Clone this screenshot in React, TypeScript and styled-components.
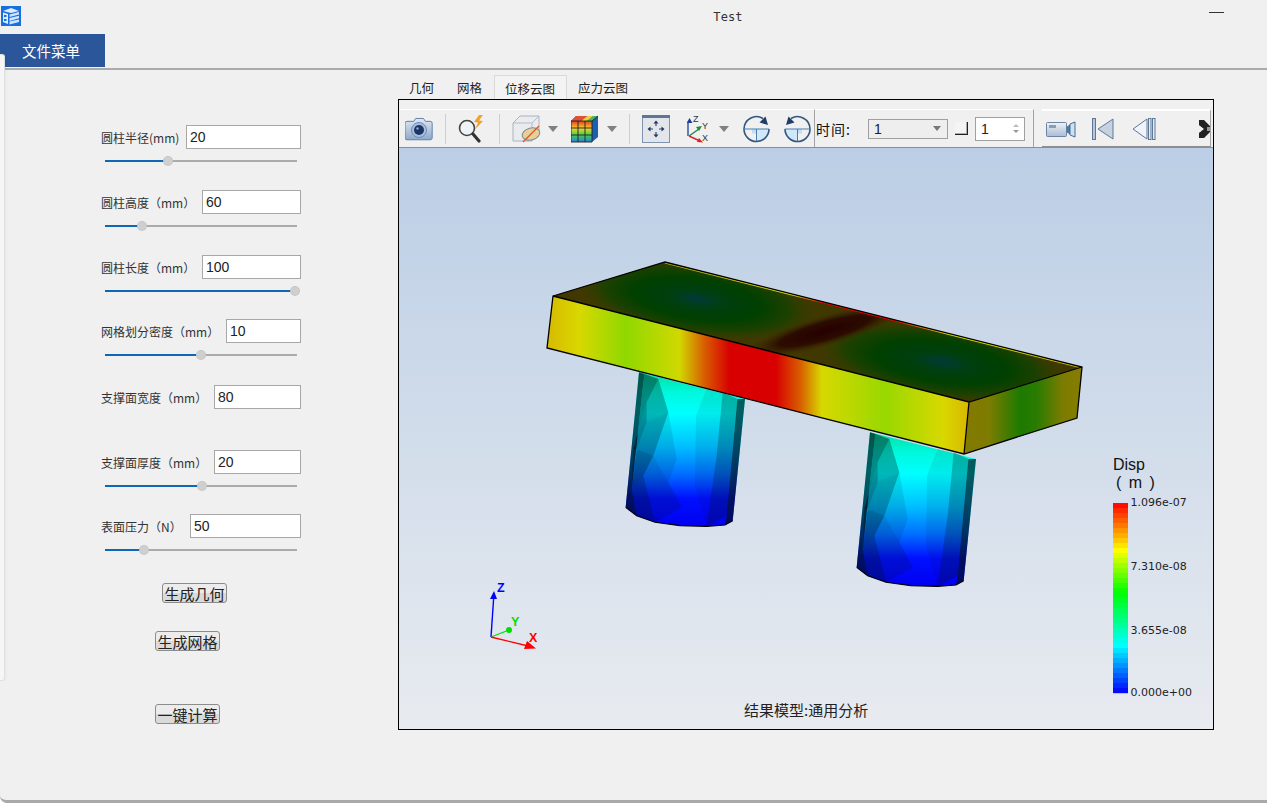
import React from "react";
import styled, { createGlobalStyle } from "styled-components";

const Global = createGlobalStyle`
  html, body { margin: 0; padding: 0; background: #fff; overflow: hidden; }
  * { box-sizing: border-box; }
`;
const cjk = `"Noto Sans CJK SC", "Liberation Sans", sans-serif`;

const Win = styled.div`
  position: relative; width: 1267px; height: 803px; background: #f0f0f0;
  border-bottom: 3px solid #a9a9a9; border-bottom-left-radius: 7px;
  font-family: ${cjk}; color: #222; overflow: hidden;
`;
const TitleBar = styled.div`
  height: 34px; display: flex; align-items: center; padding: 0 43px 2px 1px; position: relative;
`;
const Title = styled.div`
  flex: 1; text-align: center; font: 12px "DejaVu Sans Mono", monospace; color: #333;
  padding-left: 226px; margin-top: 2px; letter-spacing: 0.1px;
`;
const Minimize = styled.div`width: 15px; height: 1px; background: #333; margin-bottom: 8px;`;
const MenuBar = styled.div`height: 36px; border-bottom: 2px solid #ababab; display: flex;`;
const MenuTab = styled.div`
  width: 105px; height: 33px; background: #2b579a; color: #fff; font-size: 14.5px;
  display: flex; align-items: center; padding-left: 22px;
`;
const SideEdge = styled.div`
  position: absolute; left: 0; top: 54px; width: 5px; height: 627px; background: #f6f6f6;
  border: 1px solid #e0e0e0; border-left: 0; border-radius: 0 3px 3px 0;
  box-shadow: 1px 0 3px rgba(0,0,0,.04);
`;
const Content = styled.div`display: flex; align-items: flex-start;`;
const Form = styled.div`width: 398px; padding: 55px 0 0 101px; display: flex; flex-direction: column;`;
const Field = styled.div<{ $h: number }>`width: 200px; height: ${p => p.$h}px;`;
const FieldRow = styled.div`display: flex; justify-content: space-between; align-items: center; height: 24px;`;
const Label = styled.div`font-size: 12px; color: #333; white-space: nowrap;`;
const ValueBox = styled.div<{ $w: number }>`
  width: ${p => p.$w}px; height: 24px; background: #fff; border: 1px solid #a8a8a8;
  font: 14px "Liberation Sans", sans-serif; line-height: 23px; padding-left: 3px; color: #222;
`;
const Slider = styled.div`display: flex; align-items: center; width: 192px; height: 12px; margin: 6px 0 0 4px;`;
const Fill = styled.div`height: 2px; background: #0f67b5;`;
const Knob = styled.div`
  width: 10px; height: 10px; flex: none; margin: 0 -5px; border-radius: 50%; background: #cfcfcf;
  border: 1px dotted #bdbdbd; position: relative;
`;
const Rest = styled.div`height: 2px; flex: 1; background: #ababab;`;
const ActionButton = styled.button<{ $ml: number; $mt: number }>`
  display: block; width: 65px; height: 20px; padding: 0; margin: ${p => p.$mt}px 0 0 ${p => p.$ml}px;
  font-family: ${cjk}; font-size: 15px; line-height: 17px; color: #222;
  border: 1px solid #8c8c8c; border-radius: 3px;
  background: linear-gradient(#ececec 0, #ececec 50%, #dadada 50%, #dadada 100%);
`;
const Right = styled.div`width: 816px; padding-top: 5px;`;
const Tabs = styled.div`display: flex; height: 24px;`;
const Tab = styled.div<{ $active?: boolean }>`
  padding: 0 12px 0 11px; font-size: 12.5px; line-height: 25px; color: #222;
  ${p => p.$active ? "background: #f3f3f3; border: 1px solid #d9d9d9; border-bottom: 0; padding: 0 11px 0 10px;" : ""}
`;
const Panel = styled.div`border: 1px solid #000; height: 631px; display: flex; flex-direction: column;`;
const Toolbar = styled.div`
  height: 48px; flex: none; padding: 9px 0 0 1px; display: flex; border-bottom: 1px solid #8e8e8e; background: #f0f0f0;
`;
const Section = styled.div<{ $w: number; $ml?: number; $white?: boolean }>`
  width: ${p => p.$w}px; margin-left: ${p => p.$ml || 0}px; display: flex; align-items: center;
  border-top: 1px solid #fff; border-right: 1px solid #a3a3a3;
  ${p => p.$white ? "border-top: 2px solid #fff; border-bottom: 1px solid #8e8e8e;" : ""}
`;
const Ico = styled.svg<{ $ml: number }>`display: block; flex: none; margin-left: ${p => p.$ml}px;`;
const Sep = styled.div`width: 1px; height: 30px; flex: none; margin-left: 12px; background: #cfcfcf;`;
const TimeLabel = styled.div`font-size: 14px; letter-spacing: 1px; margin-left: 1px; color: #111; white-space: nowrap; width: 40px;`;
const Combo = styled.div`
  width: 80px; height: 20px; margin-left: 12px; border: 1px solid #a0a0a0; background: #eee;
  display: flex; align-items: center; justify-content: space-between; padding: 0 3px 0 5px;
  font: 14px "Liberation Sans", sans-serif;
`;
const DownTri = styled.div`
  width: 0; height: 0; border-left: 4.5px solid transparent; border-right: 4.5px solid transparent;
  border-top: 5px solid #777; margin-right: 3px;
`;
const CheckMark = styled.div`
  width: 13px; height: 13px; margin-left: 7px; border-right: 1px solid #222; border-bottom: 1px solid #222;
  background: #f4f4f4; box-shadow: inset -1px -1px 0 #aaa;
`;
const Spin = styled.div`
  width: 50px; height: 24px; margin-left: 7px; background: #fff; border: 1px solid #a0a0a0;
  display: flex; align-items: center; justify-content: space-between; padding: 0 5px;
  font: 14px "Liberation Sans", sans-serif;
`;
const SpinArrows = styled.div`display: flex; flex-direction: column; gap: 3px;`;
const SpinArrow = styled.div<{ $up?: boolean }>`
  width: 0; height: 0; border-left: 3px solid transparent; border-right: 3px solid transparent;
  ${p => p.$up ? "border-bottom: 3px solid #bbb;" : "border-top: 3px solid #999;"}
`;
const Viewport = styled.div`flex: 1; background: linear-gradient(#bbcee5, #e8ebf0);`;
const Scene = styled.svg`display: block;`;

const fields = [
  { label: "圆柱半径(mm)", v: "20", w: 115, pos: 63, h: 65 },
  { label: "圆柱高度（mm）", v: "60", w: 99, pos: 37, h: 65 },
  { label: "圆柱长度（mm）", v: "100", w: 99, pos: 190, h: 64 },
  { label: "网格划分密度（mm）", v: "10", w: 75, pos: 96, h: 66 },
  { label: "支撑面宽度（mm）", v: "80", w: 87, h: 65 },
  { label: "支撑面厚度（mm）", v: "20", w: 87, pos: 97, h: 64 },
  { label: "表面压力（N）", v: "50", w: 111, pos: 39, h: 69 },
];

const jet = (t: number) => {
  const stops: [number, number[]][] = [
    [0, [255, 0, 0]], [0.25, [255, 255, 0]], [0.47, [0, 255, 0]], [0.75, [0, 255, 255]], [1, [0, 0, 255]],
  ];
  for (let i = 0; i < stops.length - 1; i++) {
    const [a, ca] = stops[i], [b, cb] = stops[i + 1];
    if (t <= b) {
      const k = (t - a) / (b - a);
      return `rgb(${ca.map((c, j) => Math.round(c + (cb[j] - c) * k)).join(",")})`;
    }
  }
  return "rgb(0,0,255)";
};

const z = (pts: number[][]) => pts.map(([x, y]) => `${530 + x / 3},${250 + y / 3}`).join(" ");
const silhouette = [[327, 370], [645, 450], [608, 815], [585, 828], [530, 832], [450, 830], [375, 820], [320, 800], [287, 775]];
const facets: [number[][], number][] = [
  [[[343, 375], [385, 390], [415, 490], [440, 630], [415, 700], [455, 775], [375, 820], [320, 800], [305, 720]], 0.1],
  [[[327, 370], [343, 375], [305, 720], [320, 800], [287, 775]], 0.68],
  [[[343, 375], [385, 390], [350, 460], [310, 600], [305, 720]], 0.42],
  [[[350, 460], [350, 520], [320, 600], [310, 600]], 0.38],
  [[[385, 390], [415, 490], [350, 520], [350, 460]], 0.22],
  [[[350, 520], [415, 490], [370, 620], [320, 600]], 0.26],
  [[[320, 600], [370, 620], [340, 680], [305, 720]], 0.36],
  [[[305, 720], [340, 680], [375, 820], [320, 800]], 0.32],
  [[[370, 620], [415, 700], [455, 775], [375, 820], [340, 680]], 0.08],
  [[[530, 420], [578, 430], [560, 620], [530, 832], [495, 710], [498, 500]], 0.08],
  [[[578, 430], [622, 450], [590, 800], [530, 832], [560, 620]], 0.3],
  [[[622, 450], [645, 450], [608, 815], [585, 828], [590, 800]], 0.68],
];

const Cylinder = ({ dx, dy }: { dx: number; dy: number }) => (
  <g transform={`translate(${dx} ${dy})`}>
    <polygon points={z(silhouette)} fill="url(#cylJet)" />
    {facets.map(([p, a], i) => <polygon key={i} points={z(p)} fill="#001018" fillOpacity={a} />)}
    <polyline points={z([[608, 815], [585, 828], [530, 832], [450, 830], [375, 820], [320, 800], [287, 775]])} fill="none" stroke="#000" strokeWidth="1.1" />
  </g>
);

const Arrow = ({ ml }: { ml: number }) => (
  <Ico $ml={ml} width={10} height={6} viewBox="0 0 10 6"><path d="M0 0h10L5 6z" fill="#808080" /></Ico>
);

const Logo = () => (
  <svg width="20" height="20" viewBox="0 0 20 20" style={{ flex: "none" }}>
    <rect width="20" height="20" fill="#1a6fe0" />
    <path d="M2 5l8-3 8 3-8 2z M2 6.500l5 1.600V18l-5-2z" fill="#dfeeff" />
    <path d="M8.500 8.500L18 6v2.500L8.500 11z M8.500 12L18 9.800v2.500L8.500 15z M8.500 15.600L18 13.500V16l-9.500 2.400z" fill="#cfe4ff" />
    <path d="M3 9h2.500v2H3z M3 13h2.500v2H3z" fill="#1a6fe0" />
  </svg>
);

export default function App() {
  return (
    <Win>
      <Global />
      <TitleBar><Logo /><Title>Test</Title><Minimize /></TitleBar>
      <MenuBar><MenuTab>文件菜单</MenuTab></MenuBar>
      <SideEdge />
      <Content>
        <Form>
          {fields.map(f => (
            <Field key={f.label} $h={f.h}>
              <FieldRow><Label>{f.label}</Label><ValueBox $w={f.w}>{f.v}</ValueBox></FieldRow>
              {f.pos !== undefined && (
                <Slider><Fill style={{ width: f.pos }} /><Knob /><Rest /></Slider>
              )}
            </Field>
          ))}
          <ActionButton $ml={61} $mt={0}>生成几何</ActionButton>
          <ActionButton $ml={54} $mt={28}>生成网格</ActionButton>
          <ActionButton $ml={54} $mt={53}>一键计算</ActionButton>
        </Form>
        <Right>
          <Tabs>
            <Tab>几何</Tab><Tab>网格</Tab><Tab $active>位移云图</Tab><Tab>应力云图</Tab>
          </Tabs>
          <Panel>
            <Toolbar>
              <Section $w={415}>
                <Ico $ml={5} width={28} height={26} viewBox="0 0 28 26">
                  <defs><linearGradient id="cam" x1="0" y1="0" x2="0" y2="1"><stop offset="0" stopColor="#dfe9f4" /><stop offset="1" stopColor="#8ea9cb" /></linearGradient></defs>
                  <path d="M1.500 5h7l2-3h8l2 3h5a2 2 0 0 1 2 2v15a2 2 0 0 1-2 2h-24a2 2 0 0 1-2-2V7a2 2 0 0 1 2-2z" fill="url(#cam)" stroke="#5f7ea6" transform="translate(.5 .5) scale(.97)" />
                  <circle cx="14" cy="14" r="7.500" fill="#a9bedb" stroke="#6f8bb0" />
                  <circle cx="14" cy="14" r="5" fill="#1c3468" />
                  <circle cx="12.500" cy="12.500" r="1.200" fill="#8fa8d0" />
                </Ico>
                <Sep />
                <Ico $ml={12} width={29} height={28} viewBox="0 0 29 28">
                  <circle cx="9" cy="13" r="7.500" fill="#eef3f8" stroke="#444" strokeWidth="1.600" />
                  <path d="M15 19l6 7" stroke="#333" strokeWidth="3.200" strokeLinecap="round" />
                  <path d="M21 0l-5 7 4 .5-3 7 8-8.500-4-.5 4-5.500z" fill="#f0a22e" />
                </Ico>
                <Sep />
                <Ico $ml={12} width={30} height={28} viewBox="0 0 30 28">
                  <path d="M1 8l7-7h19v18l-7 7H1z" fill="#e9ebee" stroke="#aab3c0" />
                  <path d="M1 8h19v18 M20 8l7-7" fill="none" stroke="#b4bcc8" />
                  <ellipse cx="19" cy="19" rx="9" ry="6" fill="#e8cf98" stroke="#7f8a93" transform="rotate(-15 19 19)" />
                  <path d="M11 27L27 11" stroke="#d9562a" strokeWidth="1.300" />
                </Ico>
                <Arrow ml={6} />
                <Ico $ml={13} width={27} height={28} viewBox="0 0 27 28">
                  <defs><linearGradient id="cc" x1="0" y1="0" x2="0" y2="1"><stop offset="0" stopColor="#e23b2c" /><stop offset=".35" stopColor="#f4d42a" /><stop offset=".65" stopColor="#49d04a" /><stop offset="1" stopColor="#2a7fe0" /></linearGradient></defs>
                  <path d="M0 6l5-5h22v21l-6 5H0z" fill="#1d5fb0" />
                  <path d="M21 6l6-5h-5l-6 5z" fill="#3cbf5a" />
                  <path d="M16 6l6-5h-6l-6 5z" fill="#f2cf2e" />
                  <path d="M10 6l6-5H5L0 6z" fill="#e2503a" />
                  <rect x="0" y="6" width="21" height="21" fill="url(#cc)" />
                  <path d="M7 6v21M14 6v21M0 13h21M0 20h21M0 6h21v21H0zM21 6l6-5" stroke="#222" strokeWidth=".9" fill="none" />
                </Ico>
                <Arrow ml={9} />
                <Sep />
                <Ico $ml={12} width={28} height={28} viewBox="0 0 28 28">
                  <rect x=".5" y=".5" width="27" height="27" fill="#e2e5ea" stroke="#8093ae" />
                  <rect x="0" y="0" width="28" height="3" fill="#5f7697" />
                  <path d="M14 11v-3M14 17v3M11 14H8M17 14h3" stroke="#2f4a70" strokeWidth="1.200" />
                  <path d="M14 5.500l-2.500 3h5zM14 22.500l-2.500-3h5zM5.500 14l3-2.500v5zM22.500 14l-3-2.500v5z" fill="#1f3a60" />
                </Ico>
                <Ico $ml={17} width={27} height={28} viewBox="0 0 27 28">
                  <path d="M1 21V7" stroke="#1d3f9e" strokeWidth="1.300" />
                  <path d="M1 3l-3 5h6z" fill="#1d3f9e" transform="translate(1.500 0)" />
                  <path d="M2 21l10-7" stroke="#1c8a3c" strokeWidth="1.400" />
                  <path d="M15 11l-6 1 3 4z" fill="#1c8a3c" />
                  <path d="M2 21l11 5" stroke="#d8232a" strokeWidth="1.400" />
                  <path d="M16 27.500l-6-.5 2-4z" fill="#d8232a" />
                  <text x="6" y="7" fontSize="9" fontFamily="Liberation Sans" fill="#333">Z</text>
                  <text x="15" y="14" fontSize="9" fontFamily="Liberation Sans" fill="#333">Y</text>
                  <text x="15" y="26" fontSize="9" fontFamily="Liberation Sans" fill="#333">X</text>
                </Ico>
                <Arrow ml={5} />
                <Ico $ml={14} width={27} height={28} viewBox="0 0 27 28">
                  <path d="M13.500 14h12.500A12.500 12.500 0 0 1 13.500 26.500z" fill="#cfe8fa" />
                  <rect x="9" y="14" width="4.500" height="4.500" fill="#bfe0f7" />
                  <path d="M1 14a12.500 12.500 0 1 0 25 0" fill="none" stroke="#32567f" strokeWidth="1.600" />
                  <path d="M1 14A12.500 12.500 0 0 1 20 3.500" fill="none" stroke="#32567f" strokeWidth="1.600" />
                  <path d="M1 14h25M13.500 14v12" stroke="#4b7fb2" strokeWidth="1" />
                  <path d="M25 10l-8.500-2.500 6-6z" fill="#1f3d66" />
                </Ico>
                <Ico $ml={14} width={27} height={28} viewBox="0 0 27 28">
                  <path d="M13.500 14H1A12.500 12.500 0 0 0 13.500 26.500z" fill="#cfe8fa" />
                  <rect x="13.500" y="14" width="4.500" height="4.500" fill="#bfe0f7" />
                  <path d="M26 14a12.500 12.500 0 1 1-25 0" fill="none" stroke="#32567f" strokeWidth="1.600" />
                  <path d="M26 14A12.500 12.500 0 0 0 7 3.500" fill="none" stroke="#32567f" strokeWidth="1.600" />
                  <path d="M1 14h25M13.500 14v12" stroke="#4b7fb2" strokeWidth="1" />
                  <path d="M2 10l8.500-2.500-6-6z" fill="#1f3d66" />
                </Ico>
              </Section>
              <Section $w={219}>
                <TimeLabel>时间:</TimeLabel>
                <Combo>1<DownTri /></Combo>
                <CheckMark />
                <Spin>1<SpinArrows><SpinArrow $up /><SpinArrow /></SpinArrows></Spin>
              </Section>
              <Section $w={169} $ml={8} $white>
                <Ico $ml={4} width={30} height={18} viewBox="0 0 30 18">
                  <defs><linearGradient id="vid" x1="0" y1="0" x2="0" y2="1"><stop offset="0" stopColor="#eef2f7" /><stop offset="1" stopColor="#a9bcd3" /></linearGradient></defs>
                  <rect x=".5" y="2.500" width="20" height="14" rx="1" fill="url(#vid)" stroke="#6d84a3" />
                  <rect x="3" y="5" width="7" height="3" fill="#8b9db5" />
                  <path d="M21 7l3-2v9l-3-2z" fill="#3f7fb0" stroke="#5b7595" />
                  <path d="M24 4l5-2v15l-5-2z" fill="#cfe2ef" stroke="#4c6a8e" />
                </Ico>
                <Ico $ml={16} width={22} height={22} viewBox="0 0 22 22">
                  <rect x=".5" y=".500" width="3" height="21" fill="#b6c6d8" stroke="#5c7898" />
                  <path d="M21 1v20L6 11z" fill="#c6d2df" stroke="#5c7898" />
                </Ico>
                <Ico $ml={18} width={24} height={22} viewBox="0 0 24 22">
                  <path d="M15 1v20L1 11z" fill="#f1f4f8" stroke="#5c7898" />
                  <rect x="16.500" y=".500" width="2.500" height="21" fill="#e6ecf2" stroke="#5c7898" />
                  <rect x="20.500" y=".500" width="2.500" height="21" fill="#e6ecf2" stroke="#5c7898" />
                </Ico>
                <Ico $ml={43} width={12} height={18} viewBox="0 0 12 18">
                  <path d="M0 0h5l6 6v6l-6 6H0v-5l4-4-4-4z" fill="#222" />
                  <path d="M1 6l4 3-4 3z" fill="#eee" />
                  <rect x="8" y="7" width="3" height="4" fill="#999" />
                </Ico>
              </Section>
            </Toolbar>
            <Viewport>
              <Scene width="814" height="581" viewBox="399 149 814 581">
                <defs>
                  <linearGradient id="cylJet" gradientUnits="userSpaceOnUse" x1="0" y1="373" x2="0" y2="527">
                    <stop offset="0" stopColor="#00e0a0" />
                    <stop offset=".13" stopColor="#00f8dc" />
                    <stop offset=".27" stopColor="#00ffff" />
                    <stop offset=".48" stopColor="#00c0ff" />
                    <stop offset=".66" stopColor="#0070ff" />
                    <stop offset=".82" stopColor="#0010ff" />
                    <stop offset="1" stopColor="#0000f0" />
                  </linearGradient>
                  <linearGradient id="front" gradientUnits="userSpaceOnUse" x1="550" y1="0" x2="968" y2="0">
                    <stop offset="0" stopColor="#d8bc00" />
                    <stop offset=".07" stopColor="#d8d800" />
                    <stop offset=".18" stopColor="#90d800" />
                    <stop offset=".31" stopColor="#d0d800" />
                    <stop offset=".37" stopColor="#d85c00" />
                    <stop offset=".43" stopColor="#d80000" />
                    <stop offset=".54" stopColor="#d80000" />
                    <stop offset=".6" stopColor="#d86000" />
                    <stop offset=".65" stopColor="#d8d800" />
                    <stop offset=".8" stopColor="#98d800" />
                    <stop offset=".94" stopColor="#d8d800" />
                    <stop offset="1" stopColor="#d8b800" />
                  </linearGradient>
                  <linearGradient id="side" gradientUnits="userSpaceOnUse" x1="966" y1="0" x2="1080" y2="0">
                    <stop offset="0" stopColor="#847a00" />
                    <stop offset=".2" stopColor="#7d7c00" />
                    <stop offset=".48" stopColor="#1d7a00" />
                    <stop offset=".62" stopColor="#2a7c00" />
                    <stop offset=".85" stopColor="#7c7c00" />
                    <stop offset="1" stopColor="#867c00" />
                  </linearGradient>
                  <radialGradient id="blob">
                    <stop offset="0" stopColor="#003a38" />
                    <stop offset=".22" stopColor="#003f10" />
                    <stop offset=".5" stopColor="#004000" />
                    <stop offset=".75" stopColor="#1e4000" />
                    <stop offset="1" stopColor="#403c00" stopOpacity="0" />
                  </radialGradient>
                  <radialGradient id="red">
                    <stop offset="0" stopColor="#260000" />
                    <stop offset=".55" stopColor="#2c0c00" />
                    <stop offset="1" stopColor="#403000" stopOpacity="0" />
                  </radialGradient>
                  <linearGradient id="backEdge" gradientUnits="userSpaceOnUse" x1="665" y1="0" x2="1082" y2="0">
                    <stop offset="0" stopColor="#c8b000" />
                    <stop offset=".3" stopColor="#d8d800" />
                    <stop offset=".38" stopColor="#e00000" />
                    <stop offset=".55" stopColor="#e00000" />
                    <stop offset=".68" stopColor="#d8d800" />
                    <stop offset="1" stopColor="#d8c800" />
                  </linearGradient>
                  <clipPath id="topClip"><polygon points="553,297 665,263 1082,368 969,403" /></clipPath>
                </defs>
                <Cylinder dx={0} dy={0} />
                <Cylinder dx={231} dy={60} />
                <polygon points="553,297 665,263 1082,368 969,403" fill="#403800" />
                <g clipPath="url(#topClip)">
                  <ellipse cx="697" cy="300" rx="125" ry="40" fill="url(#blob)" transform="rotate(8 697 300)" />
                  <ellipse cx="942" cy="363" rx="130" ry="40" fill="url(#blob)" transform="rotate(8 942 363)" />
                  <ellipse cx="825" cy="332" rx="85" ry="16" fill="url(#red)" transform="rotate(-16 825 332)" />
                </g>
                <polygon points="553,297 547,349 964,455 969,403" fill="url(#front)" />
                <polygon points="969,403 964,455 1077,419 1082,368" fill="url(#side)" />
                <path d="M665 263L1082 368" stroke="url(#backEdge)" strokeWidth="1.600" transform="translate(0 .8)" fill="none" />
                <path d="M553 297L665 263L1082 368L1077 419L964 455L547 349z M553 297L969 403L1082 368 M969 403L964 455" fill="none" stroke="#000" strokeWidth="1.300" />

                <path d="M491 638l3-44" stroke="#0000ff" strokeWidth="1.400" fill="none" />
                <path d="M494 592l-4 8h7z" fill="#0000ff" />
                <path d="M491 638L509 631" stroke="#00e000" strokeWidth="1.300" />
                <circle cx="509" cy="631" r="3" fill="#00e000" />
                <path d="M491 638L528 647" stroke="#ff0000" strokeWidth="1.400" />
                <path d="M536 649.500l-12 .5 3-8z" fill="#ff0000" />
                <text x="497" y="593" fontFamily="Liberation Sans" fontWeight="700" fontSize="12.500" fill="#0000ff">Z</text>
                <text x="511" y="627" fontFamily="Liberation Sans" fontWeight="700" fontSize="12.500" fill="#00e000">Y</text>
                <text x="529" y="643" fontFamily="Liberation Sans" fontWeight="700" fontSize="12.500" fill="#ff0000">X</text>

                <text x="1113" y="471" fontFamily="Liberation Sans" fontSize="16" fill="#111">Disp</text>
                <text x="1116" y="489" fontFamily="Liberation Sans" fontSize="16" wordSpacing="3" fill="#111">( m )</text>
                {Array.from({ length: 38 }, (_, i) => (
                  <rect key={i} x="1113" y={504 + i * 5} width="15" height="5.200" fill={jet((i + 0.5) / 38)} />
                ))}
                {[["1.096e-07", 507], ["7.310e-08", 571], ["3.655e-08", 635], ["0.000e+00", 697]].map(([t, y]) => (
                  <text key={t} x="1130.500" y={y} fontFamily="DejaVu Sans" fontSize="11" fill="#222">{t}</text>
                ))}
                <text x="744" y="717" fontFamily={cjk} fontSize="15" fill="#222">结果模型:通用分析</text>
              </Scene>
            </Viewport>
          </Panel>
        </Right>
      </Content>
    </Win>
  );
}
